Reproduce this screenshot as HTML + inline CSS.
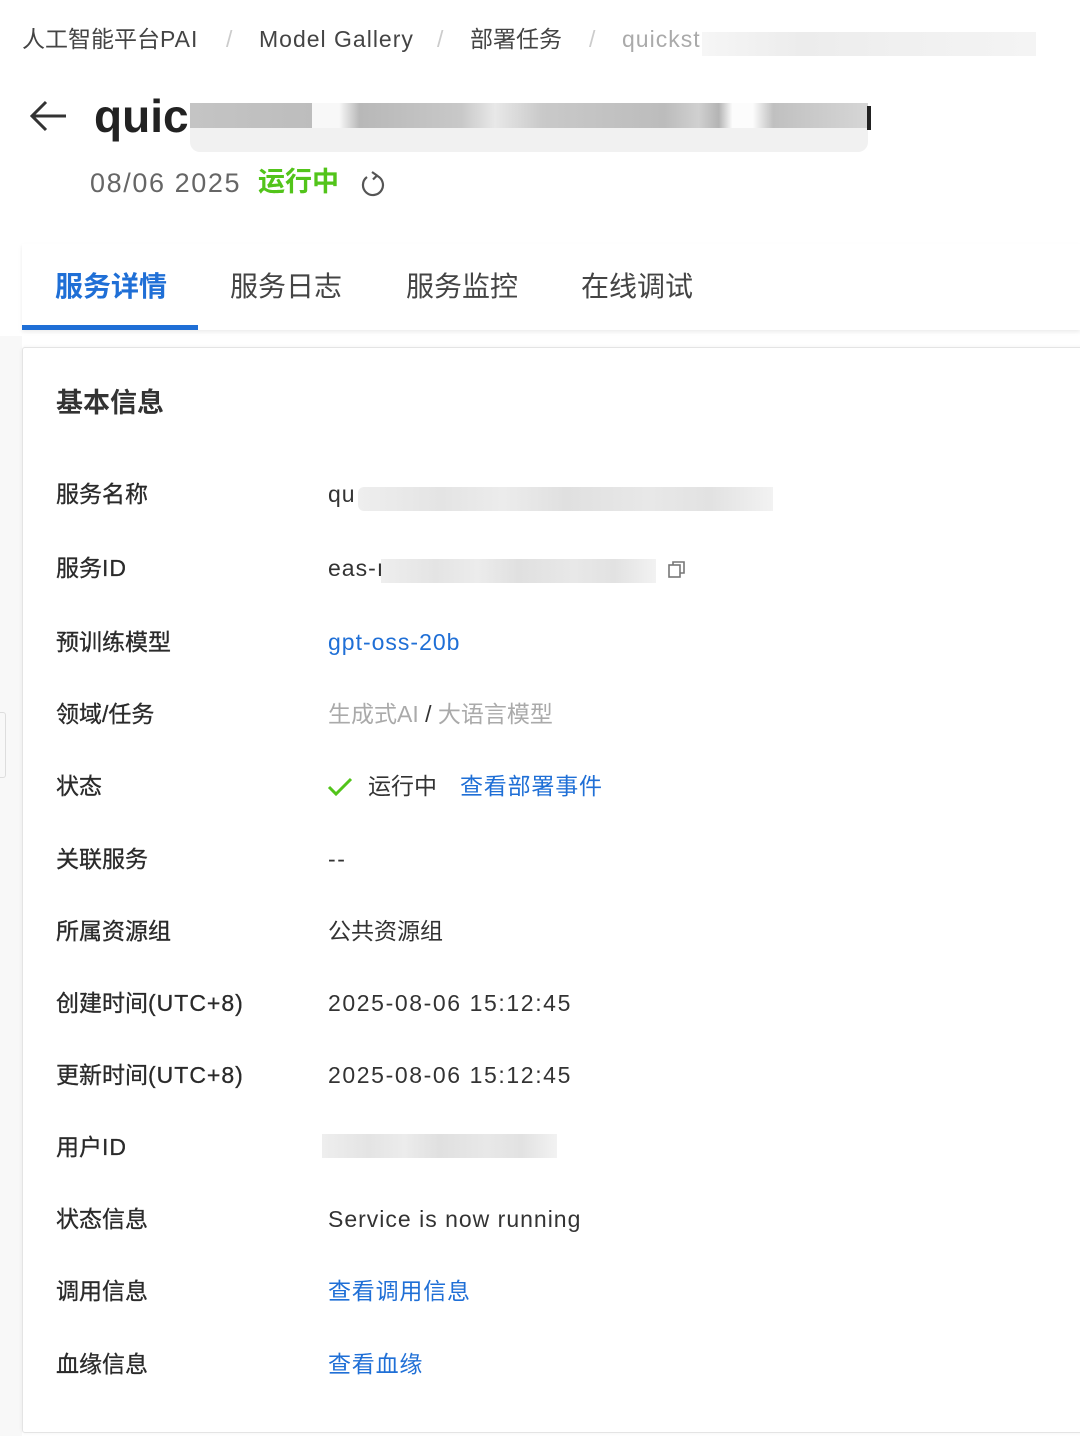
<!DOCTYPE html>
<html><head><meta charset="utf-8"><style>
*{margin:0;padding:0;box-sizing:border-box}
body{width:1080px;height:1435px;background:#fff;position:relative;overflow:hidden;font-family:"Liberation Sans","Noto Sans CJK SC",sans-serif;color:#333}
.a{position:absolute;white-space:nowrap}
.bc{top:24px;font-size:23px;color:#444;line-height:30px}
.sep{color:#ccc}
.blur{position:absolute;background:linear-gradient(90deg,#eee 0,#e4e4e4 20%,#ececec 35%,#e0e0e0 50%,#e8e8e8 70%,#e2e2e2 85%,#f2f2f2 100%)}
.lab{left:56px;font-size:23px;color:#2a2a2a;line-height:30px;-webkit-text-stroke:0.3px #2a2a2a}
.val{left:328px;font-size:23px;color:#333;line-height:30px}
.blue{color:#1f6fd6}
.tab{top:268px;font-size:28px;color:#444;line-height:38px}
.l1{letter-spacing:1px}
.l2{letter-spacing:1.6px}
</style></head><body>
<div class="a bc" style="left:22px">人工智能平台<span class="l1">PAI</span></div>
<div class="a bc sep" style="left:226px">/</div>
<div class="a bc l1" style="left:259px">Model Gallery</div>
<div class="a bc sep" style="left:437px">/</div>
<div class="a bc" style="left:470px">部署任务</div>
<div class="a bc sep" style="left:589px">/</div>
<div class="a bc l1" style="left:622px;color:#aaa">quickst</div>
<div class="blur" style="left:702px;top:32px;width:334px;height:24px;background:linear-gradient(90deg,#f6f6f6,#ececec 30%,#f0f0f0 60%,#f4f4f4)"></div>

<svg class="a" style="left:28px;top:98px" width="42" height="36" viewBox="0 0 42 36"><path d="M38 18H4M18 4L4 18l14 14" fill="none" stroke="#333" stroke-width="3"/></svg>
<div class="a" style="left:94px;top:88px;font-size:46px;font-weight:bold;color:#222;line-height:56px">quic</div>
<div class="a" style="left:190px;top:103px;width:678px;height:25px;background:linear-gradient(90deg,#c4c4c4 0,#bdbdbd 18%,#f8f8f8 18%,#f8f8f8 22%,#b8b8b8 25%,#c8c8c8 40%,#e8e8e8 45%,#c9c9c9 52%,#bcbcbc 70%,#d0d0d0 75%,#b4b4b4 78%,#fcfcfc 80%,#fcfcfc 83%,#c0c0c0 86%,#d6d6d6 100%)"></div>
<div class="a" style="left:190px;top:128px;width:678px;height:24px;background:#f1f1f1;border-radius:0 0 10px 10px"></div>
<div class="a" style="left:867px;top:106px;width:4px;height:24px;background:#222"></div>

<div class="a l2" style="left:90px;top:166px;font-size:27px;color:#666;line-height:34px">08/06 2025</div>
<div class="a" style="left:258px;top:165px;font-size:27px;color:#52c41a;font-weight:bold;line-height:34px">运行中</div>
<svg class="a" style="left:360px;top:170px" width="26" height="28" viewBox="0 0 26 28"><path d="M16 5.5A10 10 0 1 1 7 7" fill="none" stroke="#555" stroke-width="2.2"/><path d="M12 2l5 3.5-4 4" fill="none" stroke="#555" stroke-width="2.2"/></svg>

<div class="a" style="left:22px;top:244px;width:1058px;height:86px;background:#fff;box-shadow:0 2px 4px rgba(0,0,0,.08)"></div>
<div class="a tab" style="left:55px;color:#1f6fd6;font-weight:bold">服务详情</div>
<div class="a tab" style="left:230px">服务日志</div>
<div class="a tab" style="left:406px">服务监控</div>
<div class="a tab" style="left:581px">在线调试</div>
<div class="a" style="left:22px;top:325px;width:176px;height:5px;background:#1f6fd6"></div>

<div class="a" style="left:0;top:336px;width:22px;height:1100px;background:#f8f8f8"></div>
<div class="a" style="left:0;top:712px;width:6px;height:66px;border:1px solid #ddd;border-left:none;border-radius:0 3px 3px 0"></div>
<div class="a" style="left:22px;top:347px;width:1070px;height:1086px;border:1px solid #e4e4e4;border-radius:3px;background:#fff;box-shadow:0 0 4px rgba(0,0,0,.06)"></div>

<div class="a" style="left:56px;top:386px;font-size:27px;font-weight:bold;color:#333;line-height:34px">基本信息</div>

<div class="a lab" style="top:479px">服务名称</div>
<div class="a val l1" style="top:479px">qu</div>
<div class="blur" style="left:358px;top:487px;width:415px;height:24px;border-radius:6px 0 0 6px"></div>

<div class="a lab" style="top:553px">服务<span class="l1">ID</span></div>
<div class="a val l1" style="top:553px">eas-ı</div>
<div class="blur" style="left:381px;top:559px;width:275px;height:24px"></div>
<svg class="a" style="left:666px;top:559px" width="22" height="22" viewBox="0 0 22 22"><rect x="3" y="6" width="11" height="12" fill="none" stroke="#777" stroke-width="1.6"/><path d="M7 6V3h11v11h-4" fill="none" stroke="#777" stroke-width="1.6"/></svg>

<div class="a lab" style="top:627px">预训练模型</div>
<div class="a val blue l1" style="top:627px">gpt-oss-20b</div>

<div class="a lab" style="top:699px">领域/任务</div>
<div class="a val" style="top:699px;color:#aaa">生成式AI <span style="color:#333">/</span> 大语言模型</div>

<div class="a lab" style="top:771px">状态</div>
<svg class="a" style="left:327px;top:776px" width="26" height="22" viewBox="0 0 26 22"><path d="M2 11l7 7L24 3" fill="none" stroke="#52c41a" stroke-width="3"/></svg>
<div class="a val" style="left:368px;top:771px">运行中</div>
<div class="a val blue" style="left:460px;top:771px;letter-spacing:0.8px">查看部署事件</div>

<div class="a lab" style="top:844px">关联服务</div>
<div class="a val l2" style="top:844px">--</div>

<div class="a lab" style="top:916px">所属资源组</div>
<div class="a val" style="top:916px">公共资源组</div>

<div class="a lab" style="top:988px">创建时间<span class="l1">(UTC+8)</span></div>
<div class="a val l2" style="top:988px">2025-08-06 15:12:45</div>

<div class="a lab" style="top:1060px">更新时间<span class="l1">(UTC+8)</span></div>
<div class="a val l2" style="top:1060px">2025-08-06 15:12:45</div>

<div class="a lab" style="top:1132px">用户<span class="l1">ID</span></div>
<div class="blur" style="left:322px;top:1134px;width:235px;height:24px"></div>

<div class="a lab" style="top:1204px">状态信息</div>
<div class="a val l1" style="top:1204px">Service is now running</div>

<div class="a lab" style="top:1276px">调用信息</div>
<div class="a val blue" style="top:1276px;letter-spacing:0.8px">查看调用信息</div>

<div class="a lab" style="top:1349px">血缘信息</div>
<div class="a val blue" style="top:1349px;letter-spacing:0.8px">查看血缘</div>
</body></html>
